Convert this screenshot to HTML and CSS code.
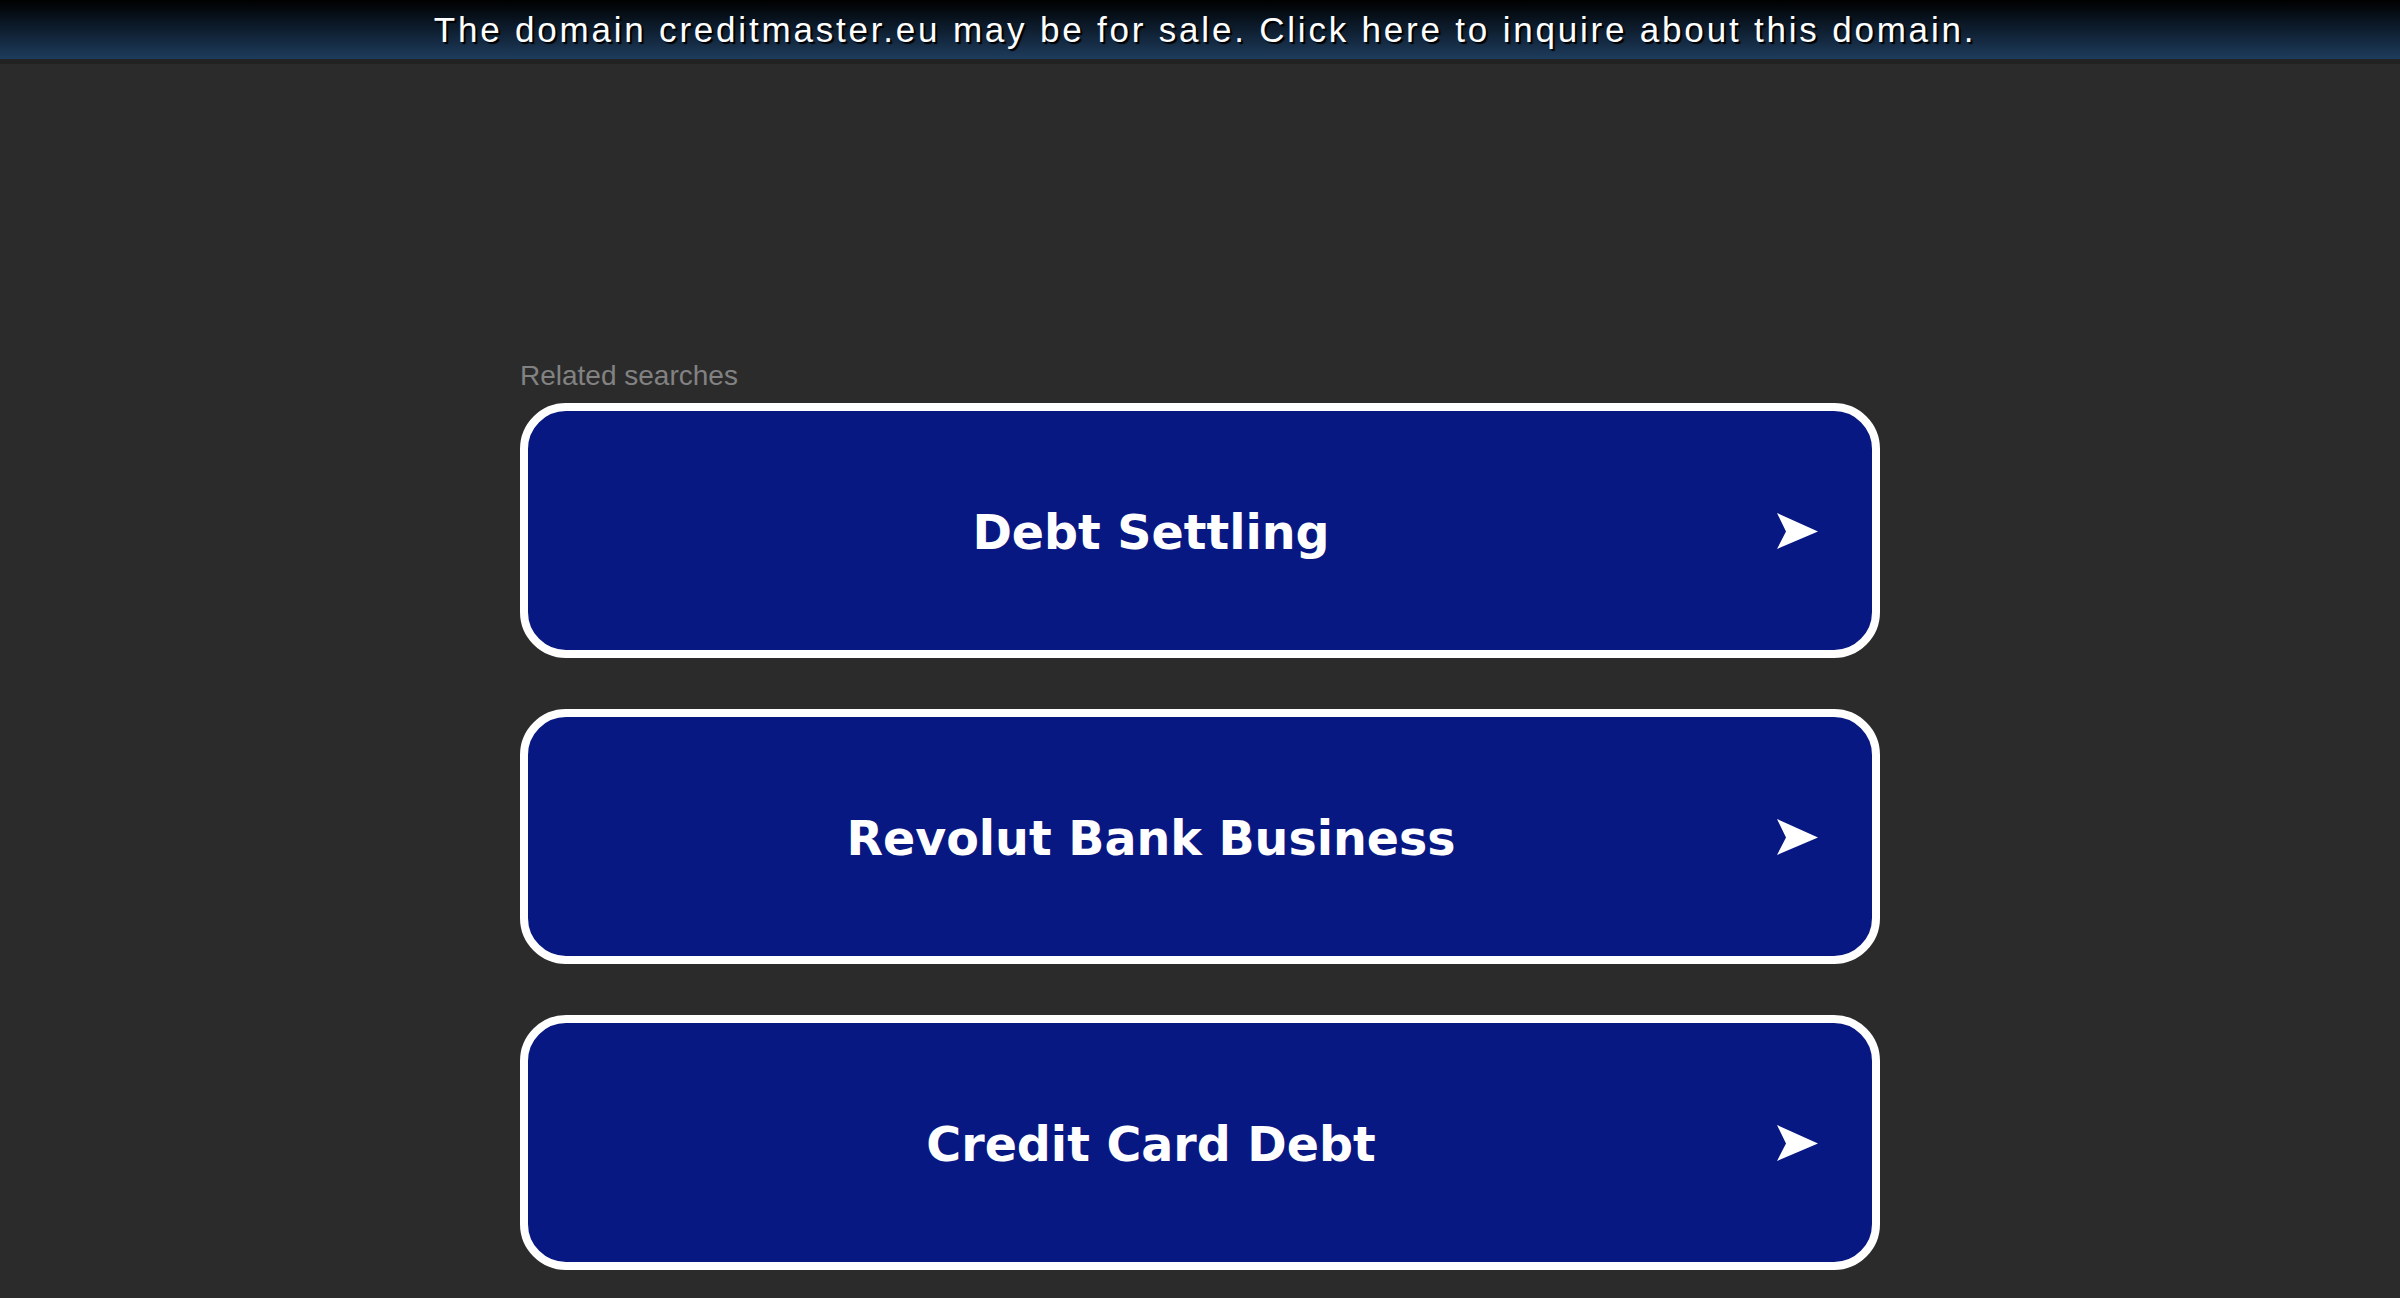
FILE: index.html
```html
<!DOCTYPE html>
<html>
<head>
<meta charset="utf-8">
<title>creditmaster.eu</title>
<link rel="stylesheet" href="styles.css">
</head>
<body>
<div class="topbar"><a class="topbar-link" href="#">The domain creditmaster.eu may be for sale. Click here to inquire about this domain.</a></div>
<main class="content">
  <div class="label">Related searches</div>
  <div class="list">
    <a class="item" href="#"><span class="item-text">Debt Settling</span><svg class="arrow" viewBox="0 0 41 36" width="41" height="36"><polygon points="0,0 41,18.5 0,36 9,18.5" fill="#fff"/></svg></a>
    <a class="item" href="#"><span class="item-text">Revolut Bank Business</span><svg class="arrow" viewBox="0 0 41 36" width="41" height="36"><polygon points="0,0 41,18.5 0,36 9,18.5" fill="#fff"/></svg></a>
    <a class="item" href="#"><span class="item-text">Credit Card Debt</span><svg class="arrow" viewBox="0 0 41 36" width="41" height="36"><polygon points="0,0 41,18.5 0,36 9,18.5" fill="#fff"/></svg></a>
  </div>
</main>
</body>
</html>
```

FILE: styles.css
```css
html, body {
  margin: 0;
  padding: 0;
  background: #2b2b2b;
}
body {
  font-family: "Liberation Sans", Arial, sans-serif;
  overflow: hidden;
}
.topbar {
  height: 59px;
  background: linear-gradient(to bottom, #000000 0%, #0b1826 40%, #1e3c5d 100%);
  border-bottom: 5px solid #222222;
  display: flex;
  align-items: center;
  justify-content: center;
}
.topbar-link {
  color: #ffffff;
  text-decoration: none;
  font-family: "Liberation Sans", Arial, sans-serif;
  font-size: 35px;
  letter-spacing: 2.8px;
  text-shadow: 2px 2px 1px #000000;
  line-height: 40px;
  margin-left: 10px;
}
.content {
  width: 1360px;
  margin: 296px auto 0;
}
.label {
  font-family: "Liberation Sans", Arial, sans-serif;
  font-size: 28px;
  line-height: 32px;
  color: #828282;
  margin-bottom: 11px;
}
.list {
  display: flex;
  flex-direction: column;
  gap: 51px;
}
.item {
  box-sizing: border-box;
  height: 255px;
  border: 8px solid #ffffff;
  border-radius: 46px;
  background: #081882;
  display: flex;
  align-items: center;
  text-decoration: none;
  padding: 0 54px 0 13px;
}
.item-text {
  flex: 1;
  text-align: center;
  color: #ffffff;
  font-family: "DejaVu Sans", Verdana, sans-serif;
  font-weight: bold;
  font-size: 47.5px;
  line-height: 60px;
  padding-top: 5px;
}
.arrow {
  flex: none;
  margin-left: 16px;
}
```
